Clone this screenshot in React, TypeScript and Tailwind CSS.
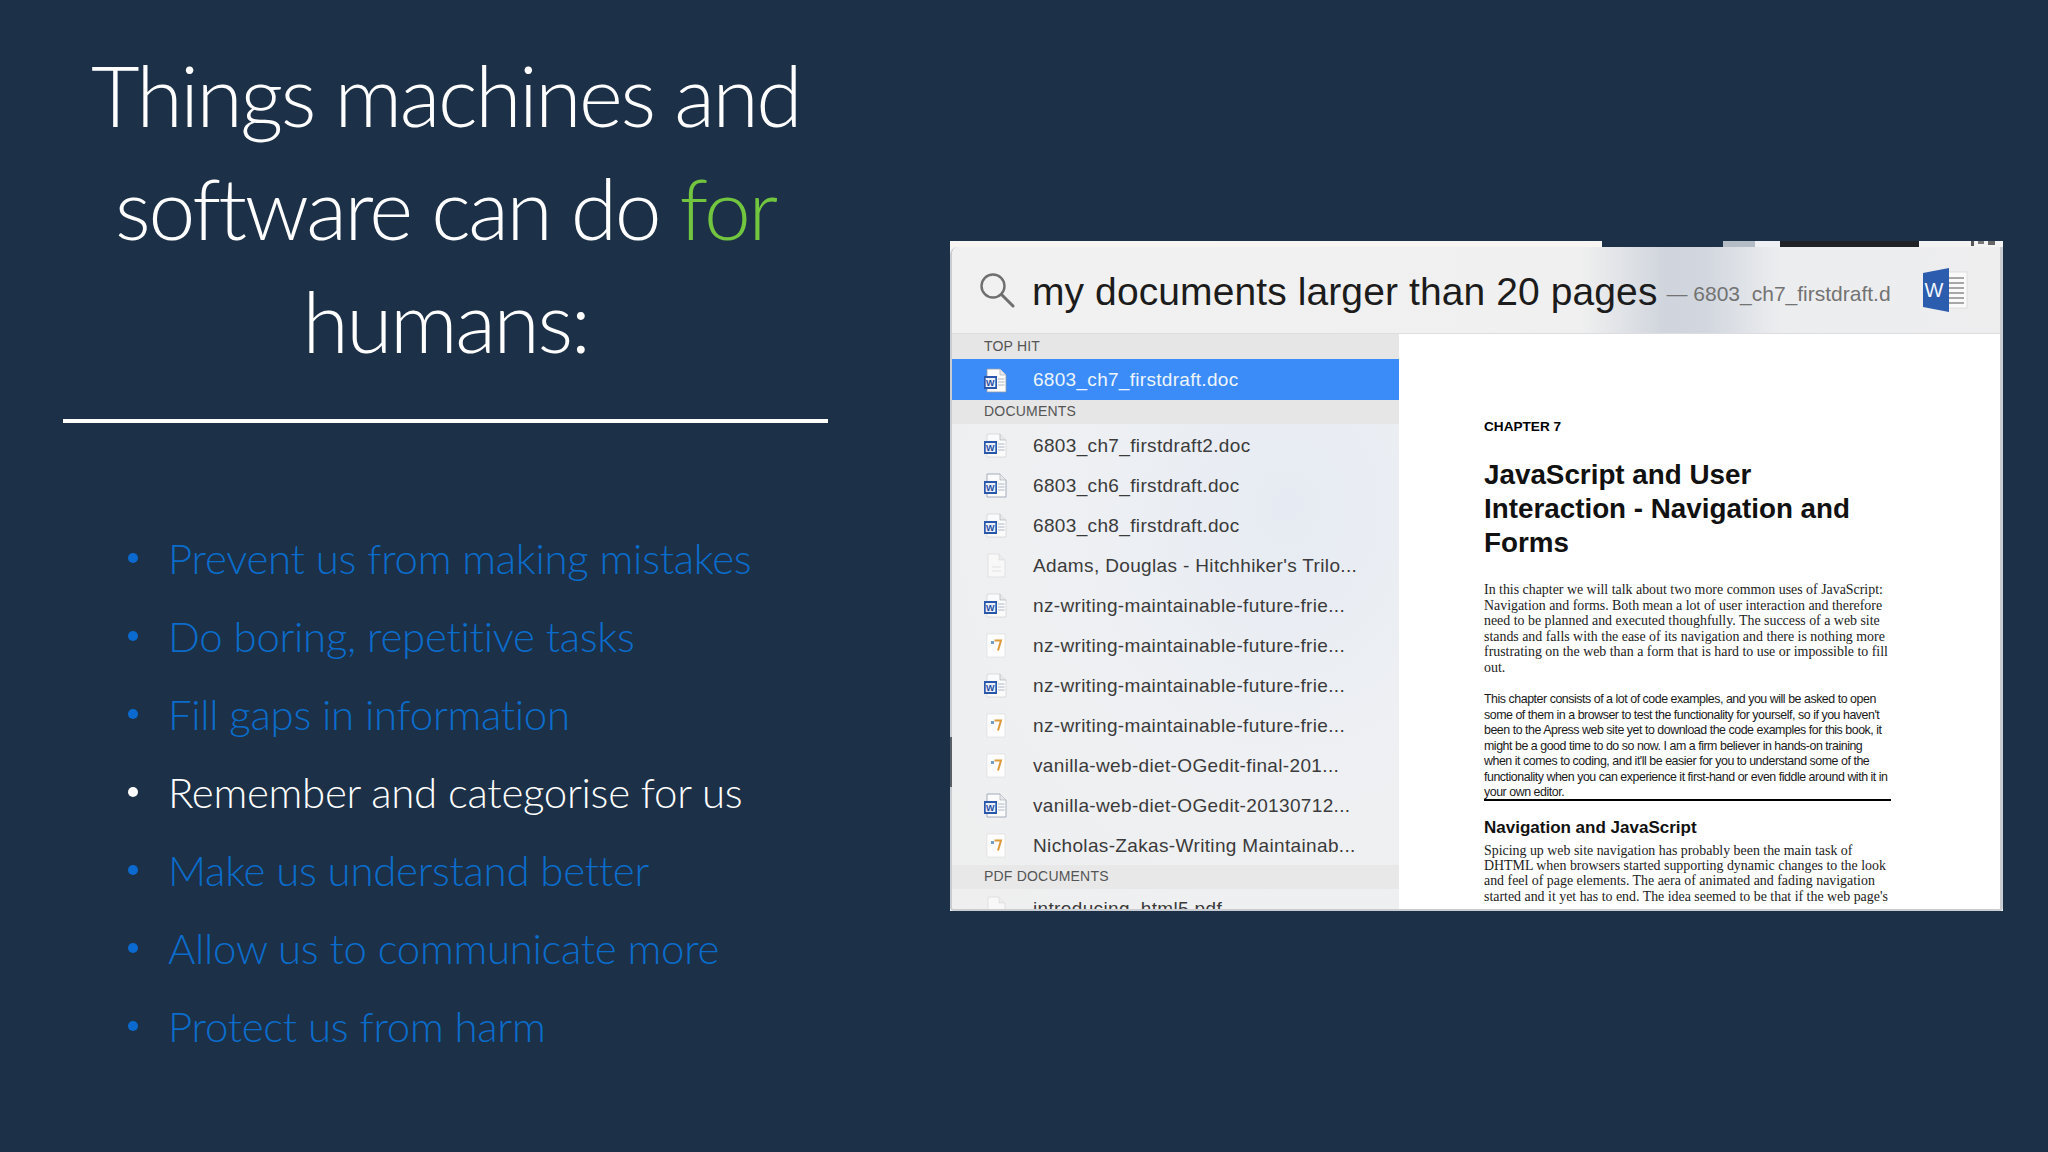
const bullets = [
  { t: "Prevent us from making mistakes" },
  { t: "Do boring, repetitive tasks" },
  { t: "Fill gaps in information" },
  { t: "Remember and categorise for us", on: true },
  { t: "Make us understand better" },
  { t: "Allow us to communicate more" },
  { t: "Protect us from harm" },
];

type Kind = "word" | "word2" | "blank" | "pages";

const rows: { k: Kind; t: string }[] = [
  { k: "word", t: "6803_ch7_firstdraft2.doc" },
  { k: "word2", t: "6803_ch6_firstdraft.doc" },
  { k: "word", t: "6803_ch8_firstdraft.doc" },
  { k: "blank", t: "Adams, Douglas - Hitchhiker's Trilo..." },
  { k: "word", t: "nz-writing-maintainable-future-frie..." },
  { k: "pages", t: "nz-writing-maintainable-future-frie..." },
  { k: "word", t: "nz-writing-maintainable-future-frie..." },
  { k: "pages", t: "nz-writing-maintainable-future-frie..." },
  { k: "pages", t: "vanilla-web-diet-OGedit-final-201..." },
  { k: "word2", t: "vanilla-web-diet-OGedit-20130712..." },
  { k: "pages", t: "Nicholas-Zakas-Writing Maintainab..." },
];

function FileIcon({ k }: { k: Kind }) {
  if (k === "pages") {
    return (
      <svg width="24" height="26" viewBox="0 0 24 26" className="shrink-0">
        <rect x="3" y="1" width="18" height="23" fill="#fdfdfd" stroke="#dedede" strokeWidth="0.7" />
        <path d="M10.5 7.5h6.5l-3 10" fill="none" stroke="#dc9a3c" strokeWidth="2" />
        <rect x="7" y="8" width="3" height="3" fill="#6f9fc9" />
      </svg>
    );
  }
  if (k === "blank") {
    return (
      <svg width="24" height="26" viewBox="0 0 24 26" className="shrink-0">
        <path d="M4 1h11l6 6v17H4z" fill="#f8f8f8" stroke="#dcdcdc" strokeWidth="0.8" />
        <path d="M15 1v6h6" fill="#ececec" stroke="#d8d8d8" strokeWidth="0.6" />
        <path d="M8 14h9M8 18h9" stroke="#ededed" strokeWidth="2" />
      </svg>
    );
  }
  return (
    <svg width="24" height="26" viewBox="0 0 24 26" className="shrink-0">
      <path d="M3 1h13l6 6v17H3z" fill="#fbfbfb" stroke={k === "word2" ? "#8f9bad" : "#d6d6d6"} strokeWidth="0.8" />
      <path d="M16 1v6h6" fill="#e8e8e8" stroke="#aab1bc" strokeWidth="0.7" />
      <path d="M14 11h6.5M14 14h6.5M14 17h6.5" stroke="#aeb8c6" strokeWidth="1" />
      <rect x="0" y="8" width="13" height="13" fill="#2a57ad" />
      <rect x="1.7" y="10" width="9.6" height="9" fill="#eaf0fa" />
      <text x="6.5" y="17.8" textAnchor="middle" fontFamily="Liberation Sans" fontWeight="700" fontSize="9" fill="#1f4da6">W</text>
    </svg>
  );
}

function SearchGlyph() {
  return (
    <svg width="36" height="36" viewBox="0 0 36 36" className="shrink-0" fill="none" stroke="#6f6f6f">
      <circle cx="14" cy="14" r="11.5" strokeWidth="2.4" />
      <path d="M22.5 22.5L34 34" strokeWidth="3" strokeLinecap="round" />
    </svg>
  );
}

function WordLogo() {
  return (
    <svg width="46" height="46" viewBox="0 0 46 46" className="shrink-0">
      <rect x="21" y="5" width="24" height="36" fill="#fafafa" stroke="#cfcfcf" strokeWidth="0.6" />
      <path d="M27 11h15M27 16h15M27 21h15M27 26h15M27 31h15M27 36h15" stroke="#555" strokeWidth="1.2" />
      <path d="M1 6L27 1v44L1 40z" fill="#2b5cad" />
      <text x="12" y="30" textAnchor="middle" fontFamily="Liberation Sans" fontSize="20" fill="#f2f6fc">W</text>
    </svg>
  );
}

export default function App() {
  return (
    <div className="w-[2048px] h-[1152px] overflow-hidden bg-[#1c3047] flex font-['Lato',sans-serif]">
      <div className="w-[765px] ml-[63px] shrink-0 flex flex-col">
        <h1 className="mt-[38px] text-center text-white font-light text-[84px] tracking-[-2.4px] leading-[113px] whitespace-nowrap">
          <div>Things machines and</div>
          <div>
            software can do <span className="text-[#72c63f]">for</span>
          </div>
          <div>humans:</div>
        </h1>
        <div className="mt-[42px] h-[4px] bg-white" />
        <ul className="mt-[96px] ml-[65px] flex flex-col">
          {bullets.map((b) => (
            <li
              key={b.t}
              className={`h-[78px] flex items-center text-[42px] font-light tracking-[-0.3px] whitespace-nowrap ${
                b.on ? "text-white" : "text-[#0b6ccb]"
              }`}
            >
              <span className={`w-[10px] h-[10px] rounded-full mr-[30px] shrink-0 ${b.on ? "bg-white" : "bg-[#0a6ad0]"}`} />
              {b.t}
            </li>
          ))}
        </ul>
      </div>

      <div className="relative ml-[122px] mt-[241px] w-[1053px] h-[670px] shrink-0 flex flex-col overflow-hidden bg-[#f4f4f4] font-['Liberation_Sans',sans-serif]">
        <div className="h-[6px] flex shrink-0">
          <div className="w-[652px] bg-[#f7f6f2]" />
          <div className="w-[121px] bg-[#1c3047]" />
          <div className="w-[32px] bg-[#b4bcc6]" />
          <div className="w-[25px] bg-[#eef0f3]" />
          <div className="w-[139px] bg-[#1f2124]" />
          <div className="flex-1 bg-[#f3f3f3] flex items-start pl-[52px] gap-[4px]">
            <span className="w-[3px] h-[5px] bg-[#555]" />
            <span className="w-[6px] h-[3px] bg-[#777]" />
            <span className="w-[7px] h-[4px] bg-[#666]" />
          </div>
        </div>
        <div className="flex-1 min-h-0 flex flex-col border-l-[2px] border-r-[3px] border-b-[2px] border-[#c9ccd0] rounded-tl-[8px] rounded-b-[4px] overflow-hidden">
          <div className="h-[87px] shrink-0 flex items-center pl-[27px] pr-[32px] border-b border-[#dcdde0] bg-[linear-gradient(90deg,#f1f1f1_0%,#f0f0f0_60%,#d0d5dd_68%,#d2d7df_72%,#ecedef_79%,#eeeeef_100%)]">
            <SearchGlyph />
            <span className="ml-[17px] mt-[2px] text-[39px] leading-none text-[#1c1c1c] tracking-[0.1px] whitespace-nowrap">
              my documents larger than 20 pages
            </span>
            <span className="ml-[9px] mt-[6px] text-[21px] leading-none text-[#737373] whitespace-nowrap">— 6803_ch7_firstdraft.d</span>
            <span className="ml-auto">
              <WordLogo />
            </span>
          </div>
          <div className="flex-1 min-h-0 flex">
            <div className="w-[447px] shrink-0 flex flex-col overflow-hidden bg-[radial-gradient(ellipse_at_75%_30%,#e6ebf3_0%,#eef0f3_45%,#efefef_100%)]">
              <div className="h-[25px] shrink-0 pl-[32px] flex items-center bg-[#e6e6e6] text-[14px] tracking-[0.2px] text-[#555]">TOP HIT</div>
              <div className="h-[41px] shrink-0 pl-[32px] pt-[2px] flex items-center bg-[#3b8cf8] text-[#eef5ff] text-[19px] tracking-[0.3px]">
                <FileIcon k="word2" />
                <span className="ml-[25px]">6803_ch7_firstdraft.doc</span>
              </div>
              <div className="h-[24px] shrink-0 pl-[32px] pb-[2px] flex items-center bg-[#e6e6e6] text-[14px] tracking-[0.2px] text-[#555]">DOCUMENTS</div>
              {rows.map((r, i) => (
                <div key={i} className={`h-[40px] shrink-0 pl-[32px] pt-[2px] flex items-center text-[19px] tracking-[0.35px] text-[#3b3b3b] whitespace-nowrap ${i === 0 ? "mt-[1px]" : ""}`}>
                  <FileIcon k={r.k} />
                  <span className="ml-[25px]">{r.t}</span>
                </div>
              ))}
              <div className="h-[24px] shrink-0 pl-[32px] pb-[2px] flex items-center bg-[#e8e8e8] text-[14px] tracking-[0.2px] text-[#555]">PDF DOCUMENTS</div>
              <div className="h-[40px] shrink-0 pl-[32px] flex items-center text-[19px] tracking-[0.35px] text-[#3b3b3b]">
                <FileIcon k="blank" />
                <span className="ml-[25px]">introducing_html5.pdf</span>
              </div>
            </div>
            <div className="flex-1 bg-white pl-[85px] text-black overflow-hidden whitespace-nowrap">
              <div className="mt-[85px] text-[13.6px] leading-[16px] font-bold">CHAPTER 7</div>
              <div className="mt-[23px] text-[27.8px] leading-[34px] font-bold text-[#111]">
                <div>JavaScript and User</div>
                <div>Interaction - Navigation and</div>
                <div>Forms</div>
              </div>
              <div className="mt-[22px] font-['Liberation_Serif',serif] text-[13.9px] leading-[15.5px] text-[#222]">
                <div>In this chapter we will talk about two more common uses of JavaScript:</div>
                <div>Navigation and forms. Both mean a lot of user interaction and therefore</div>
                <div>need to be planned and executed thoughfully. The success of a web site</div>
                <div>stands and falls with the ease of its navigation and there is nothing more</div>
                <div>frustrating on the web than a form that is hard to use or impossible to fill</div>
                <div>out.</div>
              </div>
              <div className="mt-[17px] text-[12.4px] tracking-[-0.46px] leading-[15.5px] text-[#1a1a1a]">
                <div>This chapter consists of a lot of code examples, and you will be asked to open</div>
                <div>some of them in a browser to test the functionality for yourself, so if you haven't</div>
                <div>been to the Apress web site yet to download the code examples for this book, it</div>
                <div>might be a good time to do so now. I am a firm believer in hands-on training</div>
                <div>when it comes to coding, and it'll be easier for you to understand some of the</div>
                <div>functionality when you can experience it first-hand or even fiddle around with it in</div>
                <div>your own editor.</div>
              </div>
              <div className="-mt-[2px] w-[407px] h-[2px] bg-black" />
              <div className="mt-[17px] text-[17px] leading-[20px] font-bold text-[#111]">Navigation and JavaScript</div>
              <div className="mt-[5px] font-['Liberation_Serif',serif] text-[13.9px] leading-[15.4px] text-[#222]">
                <div>Spicing up web site navigation has probably been the main task of</div>
                <div>DHTML when browsers started supporting dynamic changes to the look</div>
                <div>and feel of page elements. The aera of animated and fading navigation</div>
                <div>started and it yet has to end. The idea seemed to be that if the web page's</div>
              </div>
            </div>
          </div>
        </div>
        <div className="absolute left-0 top-[496px] w-[2px] h-[50px] bg-[#5a6068]" />
      </div>
    </div>
  );
}
